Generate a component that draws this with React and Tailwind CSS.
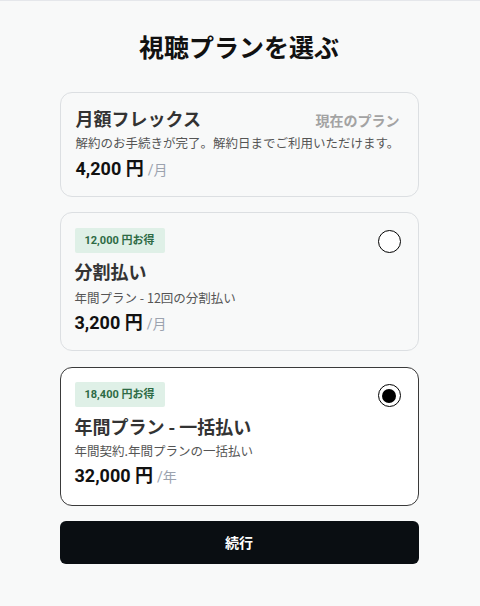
import React from "react";

const font = { fontFamily: "'Noto Sans CJK JP', 'Noto Sans', sans-serif" };
const numFont = { fontFamily: "Roboto, 'Noto Sans CJK JP', sans-serif" };

function Badge({ children }) {
  return (
    <div
      className="inline-flex h-[25px] items-center rounded-[2px] bg-[#dff0e7] px-[10px] text-[11px] font-bold leading-none text-[#2e6b45]"
      style={numFont}
    >
      {children}
    </div>
  );
}

function Radio({ selected }) {
  return (
    <div className="flex h-[23px] w-[23px] items-center justify-center rounded-full border-[1.5px] border-black bg-white">
      {selected && <div className="h-[14px] w-[14px] rounded-full bg-black" />}
    </div>
  );
}

function Price({ amount, unit }) {
  return (
    <div className="flex h-[24px] items-baseline gap-[4px] leading-6" style={numFont}>
      <span className="text-[18px] font-bold leading-6 text-[#111]">{amount}</span>
      <span className="text-[14px] leading-6 text-[#9ca3af]">{unit}</span>
    </div>
  );
}

export default function App() {
  return (
    <div
      className="min-h-[606px] w-full border-t border-[#e5e7eb] bg-[#f8f9f9] pr-[2px]"
      style={font}
    >
      <div className="mx-auto flex w-[359px] flex-col pt-[27px]">
        <h1 className="h-[36px] text-center text-[25px] font-bold leading-9 text-[#111]">
          視聴プランを選ぶ
        </h1>

        <div className="mt-[28px] flex flex-col">
          {/* Card 1 */}
          <div className="h-[105px] rounded-[12px] border border-[#dcdfe2] bg-[#f8f9f9] pl-[15px] pr-[18px] pt-[11px]">
            <div className="flex h-[28px] items-end justify-between">
              <div className="text-[18px] font-bold leading-7 text-[#333]">月額フレックス</div>
              <div className="text-[14px] font-bold leading-6 text-[#a3a3a3]">現在のプラン</div>
            </div>
            <div className="mt-[2px] h-[18px] text-[12.5px] leading-[18px] text-[#555]">
              解約のお手続きが完了。解約日までご利用いただけます。
            </div>
            <div className="mt-[5px]">
              <Price amount="4,200 円" unit="/月" />
            </div>
          </div>

          {/* Card 2 */}
          <div className="mt-[15px] h-[139px] rounded-[12px] border border-[#dcdfe2] bg-[#f8f9f9] pl-[14px] pr-[17px] pt-[15px]">
            <div className="flex h-[25px] items-start justify-between">
              <Badge>12,000 円お得</Badge>
              <div className="pt-[2px]">
                <Radio />
              </div>
            </div>
            <div className="mt-[4px] h-[28px] text-[18px] font-bold leading-7 text-[#333]">分割払い</div>
            <div className="mt-[4px] h-[18px] text-[12.5px] leading-[18px] text-[#555]">
              年間プラン - 12回の分割払い
            </div>
            <div className="mt-[4px]">
              <Price amount="3,200 円" unit="/月" />
            </div>
          </div>

          {/* Card 3 */}
          <div className="mt-[16px] h-[139px] rounded-[12px] border border-[#3a3a3a] bg-white pl-[14px] pr-[17px] pt-[14px]">
            <div className="flex h-[25px] items-start justify-between">
              <Badge>18,400 円お得</Badge>
              <div className="pt-[2px]">
                <Radio selected />
              </div>
            </div>
            <div className="mt-[5px] h-[28px] text-[18px] font-bold leading-7 text-[#333]">年間プラン - 一括払い</div>
            <div className="mt-[2px] h-[18px] text-[12.5px] leading-[18px] text-[#555]">
              年間契約.年間プランの一括払い
            </div>
            <div className="mt-[4px]">
              <Price amount="32,000 円" unit="/年" />
            </div>
          </div>

          <button className="mt-[15px] h-[43px] w-full rounded-[6px] bg-[#0a0e12] text-[14px] font-bold text-white">
            続行
          </button>
        </div>
      </div>
    </div>
  );
}
